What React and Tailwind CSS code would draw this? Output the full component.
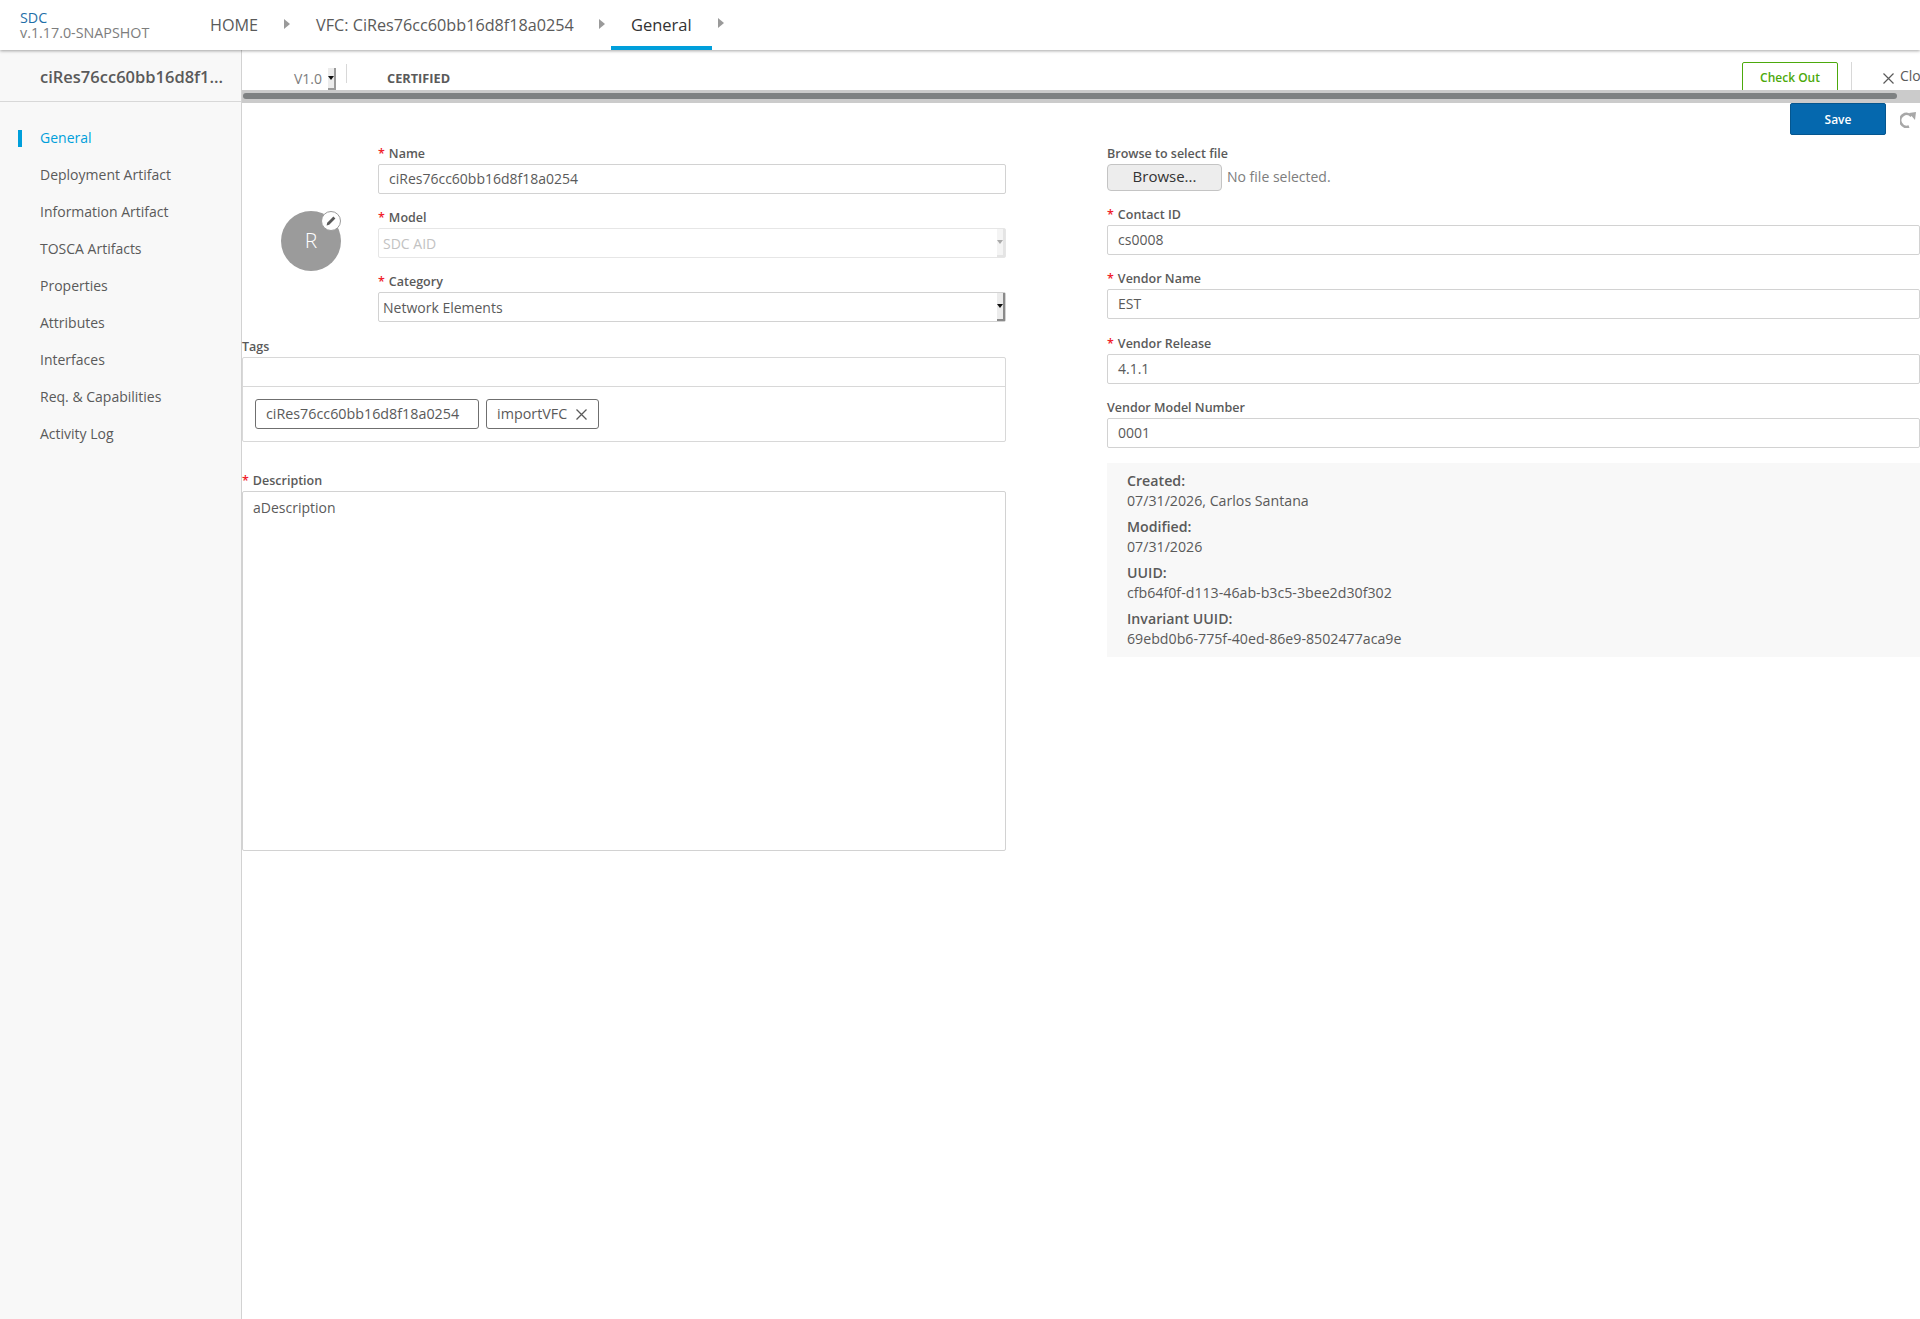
import React from "react";

const navItems = [
  "General",
  "Deployment Artifact",
  "Information Artifact",
  "TOSCA Artifacts",
  "Properties",
  "Attributes",
  "Interfaces",
  "Req. & Capabilities",
  "Activity Log",
];

const Caret = () => (
  <svg width="6" height="10" viewBox="0 0 6 10" className="shrink-0">
    <path d="M0 0 L6 5 L0 10 Z" fill="#9a9a9a" />
  </svg>
);

const FieldLabel = ({ children, required, className = "" }) => (
  <div className={`h-[22px] pt-[1px] text-[12.5px] leading-[21px] font-semibold text-[#5a5a5a] ${className}`}>
    {required && <span className="text-[#f0202c] mr-[4px]">*</span>}
    {children}
  </div>
);

const TextField = ({ value }) => (
  <div className="h-[30px] border border-[#d2d2d2] rounded-[2px] bg-white px-[10px] text-sm leading-[28px] text-[#5a5a5a]">
    {value}
  </div>
);

const SelectArrow = ({ disabled }) => (
  <div
    className={`absolute right-0 top-0 bottom-0 w-[8px] flex items-center justify-center border-r-2 border-b-2 ${
      disabled ? "bg-[#f4f4f4] border-[#e4e4e4]" : "bg-[#ececec] border-[#8a8a8a]"
    }`}
  >
    <svg width="6" height="4" viewBox="0 0 6 4">
      <path d="M0 0 H6 L3 4 Z" fill={disabled ? "#aaaaaa" : "#111111"} />
    </svg>
  </div>
);

const SelectField = ({ value, disabled }) => (
  <div
    className={`relative h-[30px] rounded-[2px] border pl-[4px] text-sm leading-[30px] ${
      disabled ? "border-[#e6e6e6] text-[#c2c2c2]" : "border-[#d2d2d2] text-[#5a5a5a]"
    }`}
  >
    {value}
    <SelectArrow disabled={disabled} />
  </div>
);

const InfoRow = ({ label, value }) => (
  <div className="mb-[6px] text-[14.2px] leading-[20px] text-[#5a5a5a]">
    <div className="font-semibold">{label}</div>
    <div>{value}</div>
  </div>
);

export default function App() {
  return (
    <div
      className="relative h-screen w-[1920px] overflow-hidden bg-white"
      style={{ fontFamily: '"Open Sans", sans-serif' }}
    >
      {/* Top bar */}
      <header className="relative z-10 flex h-[50px] items-stretch bg-white shadow-[0_1px_3px_rgba(0,0,0,0.35)]">
        <div className="w-[210px] pl-[20px] pt-[10px] text-[14.3px] leading-[15px]">
          <div className="text-[#1f6fa8]">SDC</div>
          <div className="text-[#7d7d7d]">v.1.17.0-SNAPSHOT</div>
        </div>
        <div className="flex items-center text-[16.2px] text-[#5a5a5a]">
          <span>HOME</span>
          <span className="mb-[3px] ml-[26px]"><Caret /></span>
          <span className="ml-[26px]">VFC: CiRes76cc60bb16d8f18a0254</span>
          <span className="mb-[3px] ml-[25px]"><Caret /></span>
        </div>
        <div className="ml-[6px] flex h-[50px] w-[101px] items-center justify-center border-b-4 border-[#009fdb] pt-[5px] text-[16.5px] text-[#333333]">
          General
        </div>
        <div className="ml-[6px] flex items-center pb-[4px]">
          <Caret />
        </div>
      </header>

      <div className="flex h-[1269px]">
        {/* Sidebar */}
        <aside className="w-[242px] shrink-0 border-r border-[#d2d2d2] bg-[#f8f8f8]">
          <div className="flex h-[52px] items-center border-b border-[#d8d8d8] pl-[40px] pt-[4px] text-[16.5px] font-semibold text-[#5a5a5a]">
            ciRes76cc60bb16d8f1...
          </div>
          <nav className="pt-[26px]">
            {navItems.map((item, i) => (
              <div
                key={item}
                className={`relative h-[37px] pl-[40px] text-sm leading-[20px] ${
                  i === 0 ? "text-[#009fdb]" : "text-[#5a5a5a]"
                }`}
              >
                {i === 0 && <span className="absolute left-[18px] top-[2px] h-[17px] w-[4px] bg-[#009fdb]" />}
                {item}
              </div>
            ))}
          </nav>
        </aside>

        {/* Main */}
        <main className="min-w-0 flex-1">
          <div className="relative flex h-[40px] items-start overflow-hidden">
            <div className="ml-[52px] mt-[19px] text-sm leading-[20px] text-[#7d7d7d]">V1.0</div>
            <div className="ml-[6px] mt-[18px] flex h-[22px] w-[8px] items-center justify-center border-r-2 border-b-2 border-[#9a9a9a] bg-[#ececec]">
              <svg width="6" height="4" viewBox="0 0 6 4"><path d="M0 0 H6 L3 4 Z" fill="#111111" /></svg>
            </div>
            <div className="ml-[10px] mt-[14px] h-[19px] w-px bg-[#d8d8d8]" />
            <div className="ml-[40px] mt-[20px] text-[12.75px] leading-[16px] font-bold text-[#5a5a5a]">CERTIFIED</div>
            <div className="ml-auto mr-[82px] mt-[12px] flex h-[40px] w-[96px] items-start justify-center rounded-t-[2px] border border-[#4ca90c] pt-[7px] text-xs font-semibold text-[#4ca90c]">
              Check Out
            </div>
            <div className="absolute left-[1609px] top-[12px] h-[29px] w-px bg-[#d8d8d8]" />
            <div className="absolute left-[1641px] top-[16px] flex items-start gap-[6px] text-sm leading-[20px] text-[#5a5a5a]">
              <svg width="11" height="11" viewBox="0 0 11 11" className="mt-[7px]">
                <path d="M0.5 0.5 L10.5 10.5 M10.5 0.5 L0.5 10.5" stroke="#5a5a5a" strokeWidth="1.2" />
              </svg>
              <span>Close</span>
            </div>
          </div>

          {/* Scrollbar of the toolbar */}
          <div className="flex h-[13px] items-start bg-[#cbcbcb] pl-[1px] pt-[3px]">
            <div className="h-[6px] w-[1654px] rounded-full bg-[#7e8182]" />
          </div>

          {/* Form */}
          <div className="flex">
            <div className="w-[764px] shrink-0">
              <div className="flex pt-[39px]">
                <div className="flex w-[136px] shrink-0 pt-[69px] pl-[39px]">
                  <div className="relative flex h-[60px] w-[60px] items-center justify-center rounded-full bg-[#9b9b9b] text-[21px] font-light text-white">
                    R
                    <div className="absolute right-[0px] top-[0px] flex h-[20px] w-[20px] items-center justify-center rounded-full border border-[#9b9b9b] bg-white">
                      <svg width="10" height="10" viewBox="0 0 10 10">
                        <path d="M7.4 0.6 L9.4 2.6 L3.2 8.8 L0.6 9.4 L1.2 6.8 Z" fill="#5a5a5a" />
                      </svg>
                    </div>
                  </div>
                </div>
                <div className="min-w-0 flex-1">
                  <FieldLabel required>Name</FieldLabel>
                  <TextField value="ciRes76cc60bb16d8f18a0254" />
                  <FieldLabel required className="mt-[12px]">Model</FieldLabel>
                  <SelectField value="SDC AID" disabled />
                  <FieldLabel required className="mt-[12px]">Category</FieldLabel>
                  <SelectField value="Network Elements" />
                </div>
              </div>

              <FieldLabel className="mt-[13px]">Tags</FieldLabel>
              <div className="h-[85px] rounded-[2px] border border-[#d8d8d8]">
                <div className="h-[29px] border-b border-[#d8d8d8]" />
                <div className="flex gap-[7px] pl-[12px] pt-[12px] text-[14.3px] text-[#5a5a5a]">
                  <div className="flex h-[30px] items-center rounded-[3px] border border-[#6f6f6f] pl-[10px] pr-[19px]">
                    ciRes76cc60bb16d8f18a0254
                  </div>
                  <div className="flex h-[30px] items-center gap-[9px] rounded-[3px] border border-[#6f6f6f] pl-[10px] pr-[11px]">
                    importVFC
                    <svg width="11" height="11" viewBox="0 0 11 11">
                      <path d="M0.5 0.5 L10.5 10.5 M10.5 0.5 L0.5 10.5" stroke="#5a5a5a" strokeWidth="1.3" />
                    </svg>
                  </div>
                </div>
              </div>

              <FieldLabel required className="mt-[27px]">Description</FieldLabel>
              <div className="h-[360px] rounded-[2px] border border-[#d2d2d2] px-[10px] py-[6px] text-sm leading-[20px] text-[#5a5a5a]">
                aDescription
              </div>
            </div>

            <div className="ml-[101px] min-w-0 flex-1">
              <div className="relative h-[39px]">
                <div className="absolute right-[34px] top-0 flex h-[32px] w-[96px] items-center justify-center rounded-[2px] border border-[#05568f] bg-[#0568ae] pt-[1px] text-xs font-semibold text-white">
                  Save
                </div>
                <svg width="16" height="17" viewBox="0 0 16 17" className="absolute right-[4px] top-[8px]">
                  <path d="M9 15.5 A6.5 6.5 0 1 1 11.5 5" fill="none" stroke="#a8a8a8" strokeWidth="2.6" />
                  <path d="M9 2 L16 1 L15 9 Z" fill="#a8a8a8" />
                </svg>
              </div>
              <FieldLabel>Browse to select file</FieldLabel>
              <div className="flex items-center gap-[5px] text-sm text-[#7d7d7d]">
                <div className="flex h-[27px] w-[115px] items-center justify-center rounded-[4px] border border-[#c4c4c4] bg-[#ededed] pb-[2px] text-[15px] text-[#333333]">
                  Browse...
                </div>
                <span className="pb-[2px]">No file selected.</span>
              </div>
              <FieldLabel required className="mt-[12px]">Contact ID</FieldLabel>
              <TextField value="cs0008" />
              <FieldLabel required className="mt-[12px]">Vendor Name</FieldLabel>
              <TextField value="EST" />
              <FieldLabel required className="mt-[13px]">Vendor Release</FieldLabel>
              <TextField value="4.1.1" />
              <FieldLabel className="mt-[12px]">Vendor Model Number</FieldLabel>
              <TextField value="0001" />
              <div className="mt-[15px] h-[194px] bg-[#f8f8f8] pl-[20px] pt-[8px]">
                <InfoRow label="Created:" value="07/31/2026, Carlos Santana" />
                <InfoRow label="Modified:" value="07/31/2026" />
                <InfoRow label="UUID:" value="cfb64f0f-d113-46ab-b3c5-3bee2d30f302" />
                <InfoRow label="Invariant UUID:" value="69ebd0b6-775f-40ed-86e9-8502477aca9e" />
              </div>
            </div>
          </div>
        </main>
      </div>
    </div>
  );
}
